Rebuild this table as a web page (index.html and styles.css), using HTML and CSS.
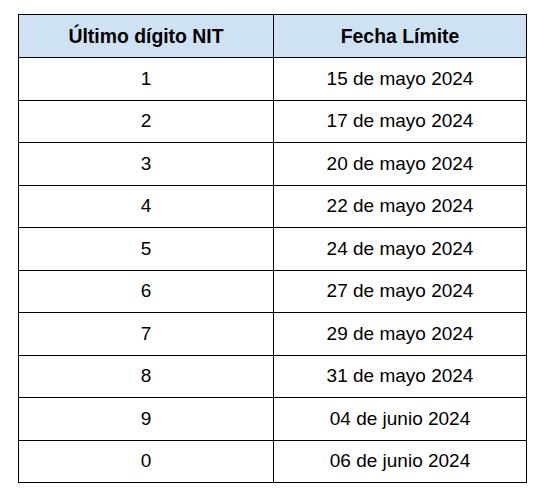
FILE: index.html
```html
<!DOCTYPE html>
<html lang="es">
<head>
  <meta charset="UTF-8">
  <title>Calendario NIT</title>
  <link rel="stylesheet" href="styles.css">
</head>
<body>
  <table class="deadlines">
    <colgroup>
      <col class="col-digit">
      <col class="col-date">
    </colgroup>
    <thead>
      <tr>
        <th>Último dígito NIT</th>
        <th>Fecha Límite</th>
      </tr>
    </thead>
    <tbody>
      <tr><td>1</td><td>15 de mayo 2024</td></tr>
      <tr><td>2</td><td>17 de mayo 2024</td></tr>
      <tr><td>3</td><td>20 de mayo 2024</td></tr>
      <tr><td>4</td><td>22 de mayo 2024</td></tr>
      <tr><td>5</td><td>24 de mayo 2024</td></tr>
      <tr><td>6</td><td>27 de mayo 2024</td></tr>
      <tr><td>7</td><td>29 de mayo 2024</td></tr>
      <tr><td>8</td><td>31 de mayo 2024</td></tr>
      <tr><td>9</td><td>04 de junio 2024</td></tr>
      <tr><td>0</td><td>06 de junio 2024</td></tr>
    </tbody>
  </table>
</body>
</html>
```

FILE: styles.css
```css
body {
  margin: 0;
  background-color: #fff;
  font-family: 'Liberation Sans', Arial, sans-serif;
  color: #000;
}
.deadlines {
  margin: 14px 0 0 18px;
  width: 508px;
  border-collapse: collapse;
  table-layout: fixed;
}
.col-digit {
  width: 255px;
}
.col-date {
  width: 253px;
}
.deadlines th,
.deadlines td {
  border: 1px solid #000;
  padding: 0;
  text-align: center;
  vertical-align: middle;
}
.deadlines th {
  height: 42px;
  background-color: #cfe2f3;
  font-size: 19.4px;
  font-weight: bold;
}
.deadlines td {
  height: 41.5px;
  font-size: 19px;
}
```
